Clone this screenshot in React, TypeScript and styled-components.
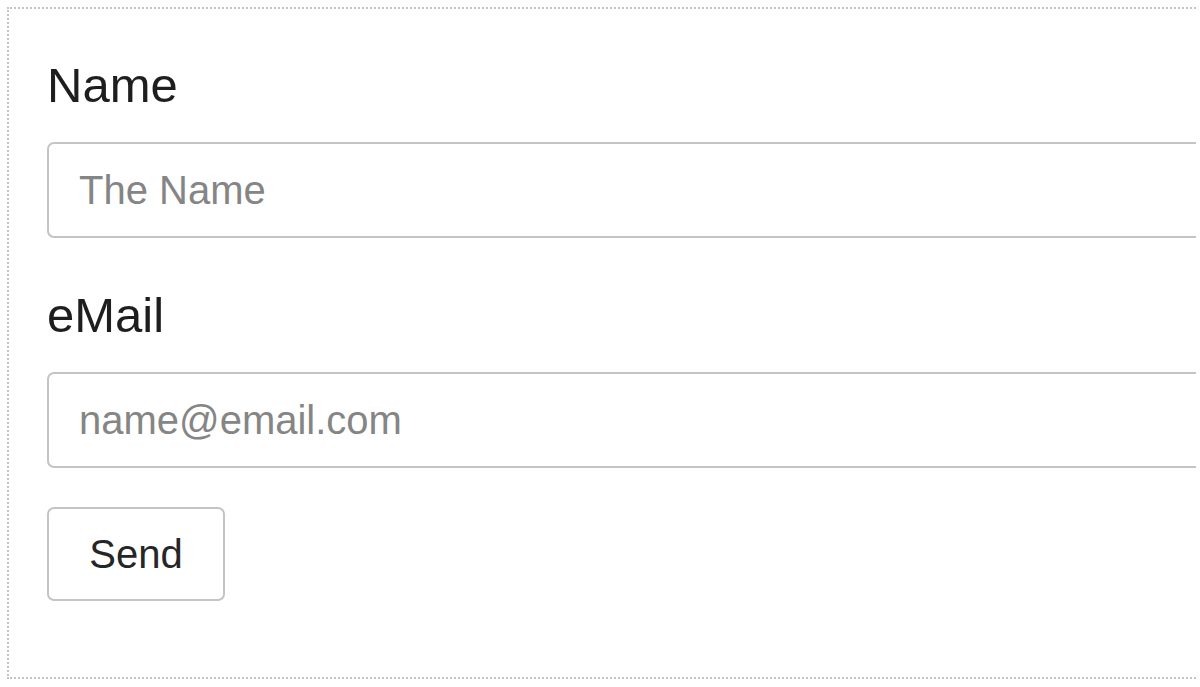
import React from "react";
import styled, { createGlobalStyle } from "styled-components";

const Global = createGlobalStyle`
  html, body { margin: 0; padding: 0; background: #ffffff; }
  body { font-family: "Liberation Sans", Arial, sans-serif; overflow: hidden; }
`;

const Viewport = styled.div`
  width: 1196px;
  height: 687px;
  overflow: hidden;
  background: #ffffff;
`;

const Frame = styled.form`
  margin: 7px 0 0 7px;
  width: 1260px;
  border: 2px dotted #c4c4c4;
  padding: 48px 38px 76px 38px;
  box-sizing: border-box;
  display: flex;
  flex-direction: column;
  align-items: flex-start;
`;

const Field = styled.div<{ $gapAfter: number }>`
  display: flex;
  flex-direction: column;
  width: 1180px;
  margin-bottom: ${(p) => p.$gapAfter}px;
`;

const Label = styled.label`
  font-size: 49px;
  line-height: 56px;
  color: #1e1e1e;
  margin-bottom: 29px;
`;

const Input = styled.input`
  height: 96px;
  box-sizing: border-box;
  border: 2px solid #c4c4c4;
  border-radius: 7px;
  padding: 0 30px;
  font-family: "Liberation Sans", Arial, sans-serif;
  font-size: 40px;
  color: #333333;
  background: #ffffff;
  outline: none;
  &::placeholder {
    color: #858585;
  }
`;

const Button = styled.button`
  width: 178px;
  height: 94px;
  box-sizing: border-box;
  border: 2px solid #c4c4c4;
  border-radius: 7px;
  background: #ffffff;
  font-family: "Liberation Sans", Arial, sans-serif;
  font-size: 40px;
  color: #262626;
  padding: 0;
  cursor: pointer;
`;

export default function App() {
  return (
    <Viewport>
      <Global />
      <Frame onSubmit={(e) => e.preventDefault()}>
        <Field $gapAfter={49}>
          <Label htmlFor="name">Name</Label>
          <Input id="name" placeholder="The Name" />
        </Field>
        <Field $gapAfter={39}>
          <Label htmlFor="email">eMail</Label>
          <Input id="email" placeholder="name@email.com" />
        </Field>
        <Button type="submit">Send</Button>
      </Frame>
    </Viewport>
  );
}
